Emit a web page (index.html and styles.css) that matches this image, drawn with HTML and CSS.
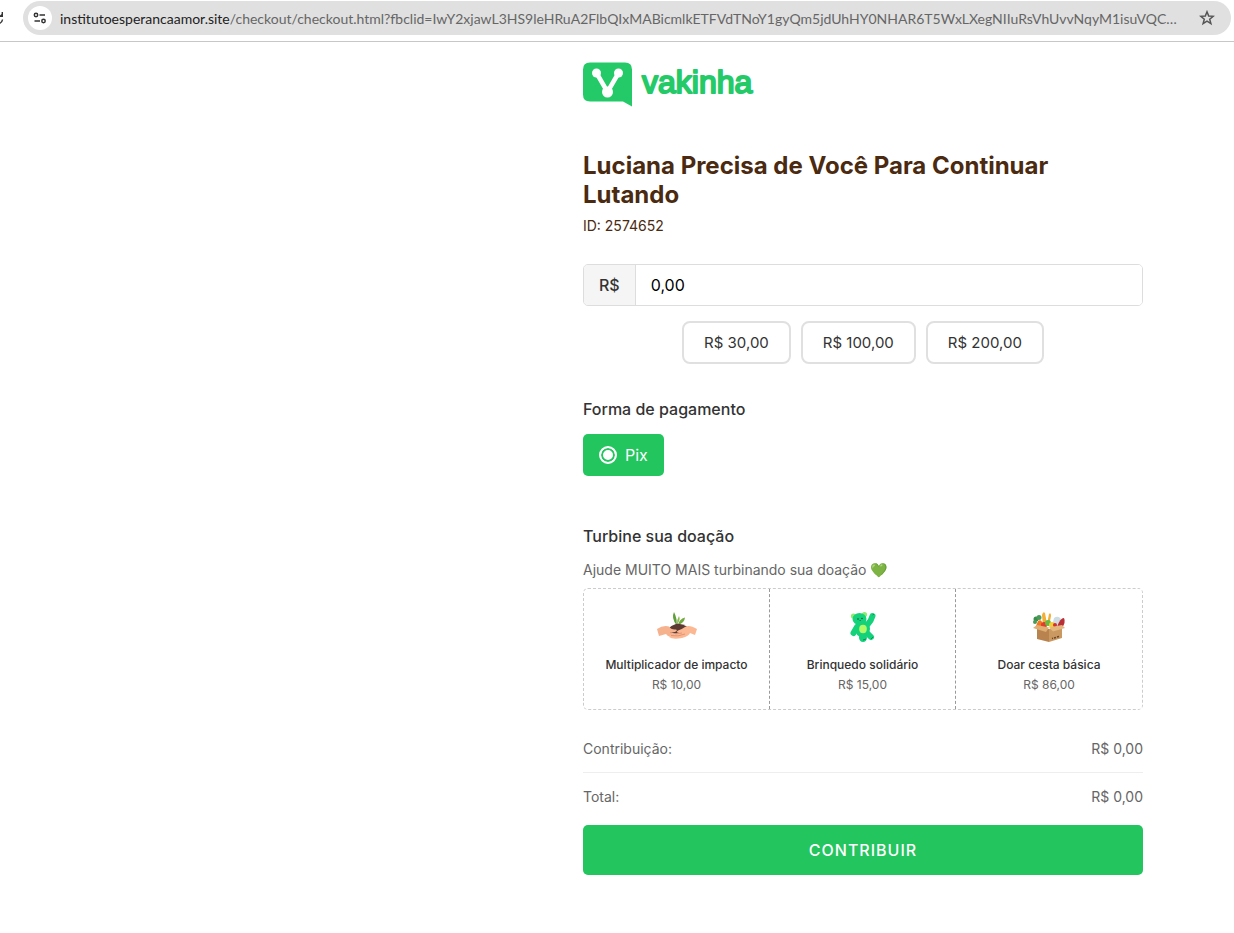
FILE: index.html
```
<!DOCTYPE html>
<html lang="pt-BR">

<head>
    <meta charset="UTF-8">
    <meta name="viewport" content="width=device-width, initial-scale=1.0">
    <title>Vakinha</title>
    <link rel="stylesheet" href="styles.css">
</head>

<body>
    <div class="browser-bar">
        <svg class="reload" width="4" height="18" viewBox="0 0 4 18">
            <path d="M3 3V8H0V6.500L1.600 5V3zM0 13.500Q1.500 12.500 1.800 10.500H3.200Q3 13.500 0 15z" fill="#333" />
        </svg>
        <div class="address">
            <button class="site-info" aria-label="Informações do site">
                <svg width="14" height="12" viewBox="0 0 14 12" fill="none" stroke="#333" stroke-width="1.500">
                    <circle cx="3" cy="3" r="1.700" />
                    <path d="M6.500 3H12M1.500 9H7" />
                    <circle cx="10.500" cy="9" r="1.700" />
                </svg>
            </button>
            <span class="url"><b>institutoesperancaamor.site</b>/checkout/checkout.html?fbclid=IwY2xjawL3HS9leHRuA2FlbQIxMABicmlkETFVdTNoY1gyQm5jdUhHY0NHAR6T5WxLXegNIIuRsVhUvvNqyM1isuVQC…</span>
            <button class="star" aria-label="Favoritar">
                <svg width="16" height="16" viewBox="0 0 16 16" fill="none" stroke="#555" stroke-width="1.500">
                    <path d="M8 1.800L9.700 6l4.500.3-3.500 2.900 1.200 4.400L8 11.200l-3.900 2.400 1.200-4.400L1.800 6.300 6.300 6z" />
                </svg>
            </button>
        </div>
    </div>

    <main class="container">
        <a class="logo" href="#">
            <svg width="176" height="45" viewBox="0 0 176 45">
                <path d="M7 .5H42Q49 .5 49 7.500V44.500L40 39.500H7Q0 39.500 0 32.500V7.500Q0 .5 7 .5z" fill="#24ca68" />
                <path d="M13.500 11L24.500 30L35.500 11" fill="none" stroke="#fff" stroke-width="4.500" />
                <circle cx="13.500" cy="11" r="4.500" fill="#fff" />
                <circle cx="35.500" cy="11" r="4.500" fill="#fff" />
                <circle cx="24.500" cy="30" r="5.500" fill="#fff" />
                <text class="logo-name" x="59" y="31">vakinha</text>
            </svg>
        </a>

        <h1>Luciana Precisa de Você Para Continuar Lutando</h1>
        <p class="campaign-id">ID: 2574652</p>

        <div class="amount">
            <label for="valor">R$</label>
            <input type="text" id="valor" value="0,00">
        </div>
        <div class="quick-values">
            <button>R$ 30,00</button>
            <button>R$ 100,00</button>
            <button>R$ 200,00</button>
        </div>

        <h2>Forma de pagamento</h2>
        <label class="pix">
            <input type="radio" name="pagamento" checked>
            <span>Pix</span>
        </label>

        <h2 class="boost-title">Turbine sua doação</h2>
        <p class="boost-text">Ajude MUITO MAIS turbinando sua doação 💚</p>
        <div class="boosts">
            <button class="boost">
                <svg width="40" height="40" viewBox="0 0 40 40">
                    <path d="M19.500 18Q20.500 12 17 5Q14 11 19.500 18z" fill="#5f9e3a" />
                    <path d="M20 17Q20 12 22 9Q24 13 20 17z" fill="#8bbb50" />
                    <path d="M21 18Q22 12 28 10.500Q27.500 16 21 18z" fill="#72a83f" />
                    <path d="M11 22Q15 18 20 16.500Q26 17 30 19.500L31 24Q21 29 13 25z" fill="#5b3a31" />
                    <path d="M0 22Q6 18 12 19.500Q14 23 19 22.500Q21 23.500 18 25L13 25.500Q20 29 24 27Q24 29 19 30Q12 31 9 27L2 29z" fill="#f6b18d" />
                    <path d="M40 22Q32 17 28 20Q25 22 21 23.500Q18 25.500 22 25.500Q17 28 12 28Q15 30 12 30Q16 33 25 31Q32 29 33 26L38 28z" fill="#fbb893" />
                    <path d="M13 25.500Q19 28 25 26M14 28.500Q21 30 28 27" fill="none" stroke="#d98563" stroke-width=".7" />
                </svg>
                <span class="boost-name">Multiplicador de impacto</span>
                <span class="boost-price">R$ 10,00</span>
            </button>
            <button class="boost">
                <svg width="40" height="40" viewBox="0 0 40 40">
                    <g fill="none" stroke="#14d27a" stroke-width="6" stroke-linecap="round">
                        <path d="M25 17Q28 14 29.500 9M14 20L10.500 26M25 27L28 30" />
                    </g>
                    <circle cx="10.500" cy="9" r="2.600" fill="#8ceb70" />
                    <circle cx="21.500" cy="7.500" r="2.600" fill="#8ceb70" />
                    <ellipse cx="19.500" cy="22" rx="7.500" ry="8.500" fill="#14d27a" />
                    <ellipse cx="20" cy="30.500" rx="4" ry="4.500" fill="#14d27a" />
                    <ellipse cx="16.500" cy="12" rx="7" ry="6" fill="#14d27a" />
                    <ellipse cx="20" cy="22" rx="3.800" ry="4.200" fill="#b3fa68" />
                    <circle cx="15" cy="12" r=".8" fill="#124b35" />
                    <circle cx="19" cy="11.500" r=".8" fill="#124b35" />
                    <path d="M16.500 13.500h1.500M20 33l3-1M28 32l2-2M29.500 8l1.500-1" stroke="#096b43" stroke-width=".7" />
                </svg>
                <span class="boost-name">Brinquedo solidário</span>
                <span class="boost-price">R$ 15,00</span>
            </button>
            <button class="boost">
                <svg width="40" height="40" viewBox="0 0 40 40">
                    <path d="M14 19L13 8Q14 4 16 6L18 17M18 17L20 7Q22 5 22 9L20 19" fill="#f2ae35" />
                    <path d="M23 20L25 11Q29 8 32 12L28 20z" fill="#cbdce3" />
                    <path d="M28 20Q31 11 35 11Q37 15 33 21z" fill="#b82f35" />
                    <circle cx="7" cy="12" r="2.500" fill="#388e4a" />
                    <circle cx="10" cy="10.500" r="2.500" fill="#4b9b58" />
                    <circle cx="6" cy="15" r="2" fill="#4b9b58" />
                    <path d="M7 19L9 14Q13 11 14 19z" fill="#f2761f" />
                    <circle cx="15" cy="18" r="3" fill="#e43b2e" />
                    <circle cx="19" cy="16" r="3" fill="#64ba42" />
                    <circle cx="23" cy="18" r="3" fill="#f3ce39" />
                    <circle cx="26" cy="18" r="2" fill="#d92e2b" />
                    <path d="M8 19L20 22V35L8 32z" fill="#b9834f" />
                    <path d="M20 22L33 19V31L20 35z" fill="#c99961" />
                    <path d="M8 18L20 20.500L17 25L4 21z" fill="#dfae72" />
                    <path d="M20 20.500L33 18L36 21L24 24.500z" fill="#e4b77e" />
                    <path d="M23 31.500l1-.3M25 31l2-.5M28 30l2-.5" stroke="#70472b" stroke-width="1.500" />
                </svg>
                <span class="boost-name">Doar cesta básica</span>
                <span class="boost-price">R$ 86,00</span>
            </button>
        </div>

        <div class="summary-row">
            <span>Contribuição:</span>
            <span>R$ 0,00</span>
        </div>
        <div class="summary-row total">
            <span>Total:</span>
            <span>R$ 0,00</span>
        </div>
        <button class="submit">CONTRIBUIR</button>
    </main>
</body>

</html>
```
FILE: styles.css
```
* {
    box-sizing: border-box;
}

body {
    font-family: 'Inter', sans-serif;
    margin: 0;
    background-color: #fff;
    color: #333;
}

button {
    font-family: inherit;
    cursor: pointer;
}

/* browser bar */
.browser-bar {
    display: flex;
    align-items: center;
    padding: 1px 3px 6px 0;
    border-bottom: 1px solid #c7c7c7;
}

.address {
    display: flex;
    flex: 1;
    min-width: 0;
    align-items: center;
    height: 34px;
    margin-left: 19px;
    padding: 0 16px 0 5px;
    border-radius: 17px;
    background-color: #e0e0e0;
}

.site-info,
.star {
    display: flex;
    flex-shrink: 0;
    align-items: center;
    justify-content: center;
    padding: 0;
    border: none;
    background: none;
}

.site-info {
    width: 24px;
    height: 24px;
    border-radius: 50%;
    background-color: #fff;
}

.url {
    flex: 1;
    min-width: 0;
    margin: 0 8px;
    overflow: hidden;
    white-space: nowrap;
    font-family: 'Lato', sans-serif;
    font-size: 14px;
    color: #666;
}

.url b {
    font-weight: 400;
    color: #222;
}

/* checkout */
.container {
    max-width: 560px;
    margin: 0 91px 0 auto;
    padding: 20px 0 40px;
}

.logo {
    display: flex;
    width: max-content;
    margin-bottom: 44px;
}

.logo-name {
    font-family: 'Liberation Sans', sans-serif;
    font-size: 32px;
    fill: #24ca68;
    stroke: #24ca68;
    stroke-width: 2px;
    stroke-linejoin: round;
}

h1 {
    margin: 0 0 8px;
    font-size: 24px;
    font-weight: 700;
    line-height: 29px;
    color: #4a2a10;
}

.campaign-id {
    margin: 0 0 29px;
    font-size: 14px;
    line-height: 18px;
    color: #4a2a10;
}

.amount {
    display: flex;
    height: 42px;
    border: 1px solid #ddd;
    border-radius: 5px;
    overflow: hidden;
    font-size: 16px;
}

.amount label {
    padding: 0 15px;
    border-right: 1px solid #ddd;
    background-color: #f5f5f5;
    font-weight: 500;
    line-height: 40px;
}

.amount input {
    flex: 1;
    min-width: 0;
    padding: 0 15px;
    border: none;
    font: inherit;
    color: #000;
}

.quick-values {
    display: flex;
    justify-content: center;
    gap: 10px;
    margin: 15px 0 35px;
}

.quick-values button {
    padding: 10px 20px;
    border: 2px solid #e0e0e0;
    border-radius: 8px;
    background-color: #fff;
    font-size: 15px;
    line-height: 19px;
    color: #333;
}

h2 {
    margin: 0 0 15px;
    font-size: 16px;
    font-weight: 500;
    line-height: 20px;
}

.pix {
    display: flex;
    align-items: center;
    gap: 8px;
    width: max-content;
    height: 42px;
    padding: 0 16px;
    border-radius: 5px;
    background-color: #22c55e;
    color: #fff;
    font-size: 16px;
}

.pix input {
    appearance: none;
    width: 18px;
    height: 18px;
    margin: 0;
    border: 2px solid #fff;
    border-radius: 50%;
    background-color: #fff;
    box-shadow: inset 0 0 0 2px #22c55e;
}

.boost-title {
    margin: 50px 0 14px;
}

.boost-text {
    margin: 0 0 8px;
    font-size: 14px;
    line-height: 20px;
    color: #666;
}

.boosts {
    display: grid;
    grid-template-columns: repeat(3, 1fr);
    margin-bottom: 29px;
    border: 1px dashed #ccc;
    border-radius: 5px;
}

.boost {
    display: flex;
    flex-direction: column;
    align-items: center;
    padding: 18px 10px 16px;
    border: none;
    border-right: 1px dashed #999;
    background: none;
    font-size: 12px;
    line-height: 16px;
}

.boost:last-child {
    border-right: none;
}

.boost-name {
    margin: 10px 0 4px;
    font-weight: 500;
    color: #333;
}

.boost-price {
    color: #666;
}

.summary-row {
    display: flex;
    justify-content: space-between;
    padding-bottom: 13px;
    border-bottom: 1px solid #eee;
    font-size: 14px;
    line-height: 20px;
    color: #666;
}

.total {
    padding: 14px 0 18px;
    border-bottom: none;
}

.submit {
    width: 100%;
    height: 50px;
    border: none;
    border-radius: 5px;
    background-color: #22c55e;
    color: #fff;
    font-size: 16px;
    font-weight: 500;
    letter-spacing: 1px;
}
```
